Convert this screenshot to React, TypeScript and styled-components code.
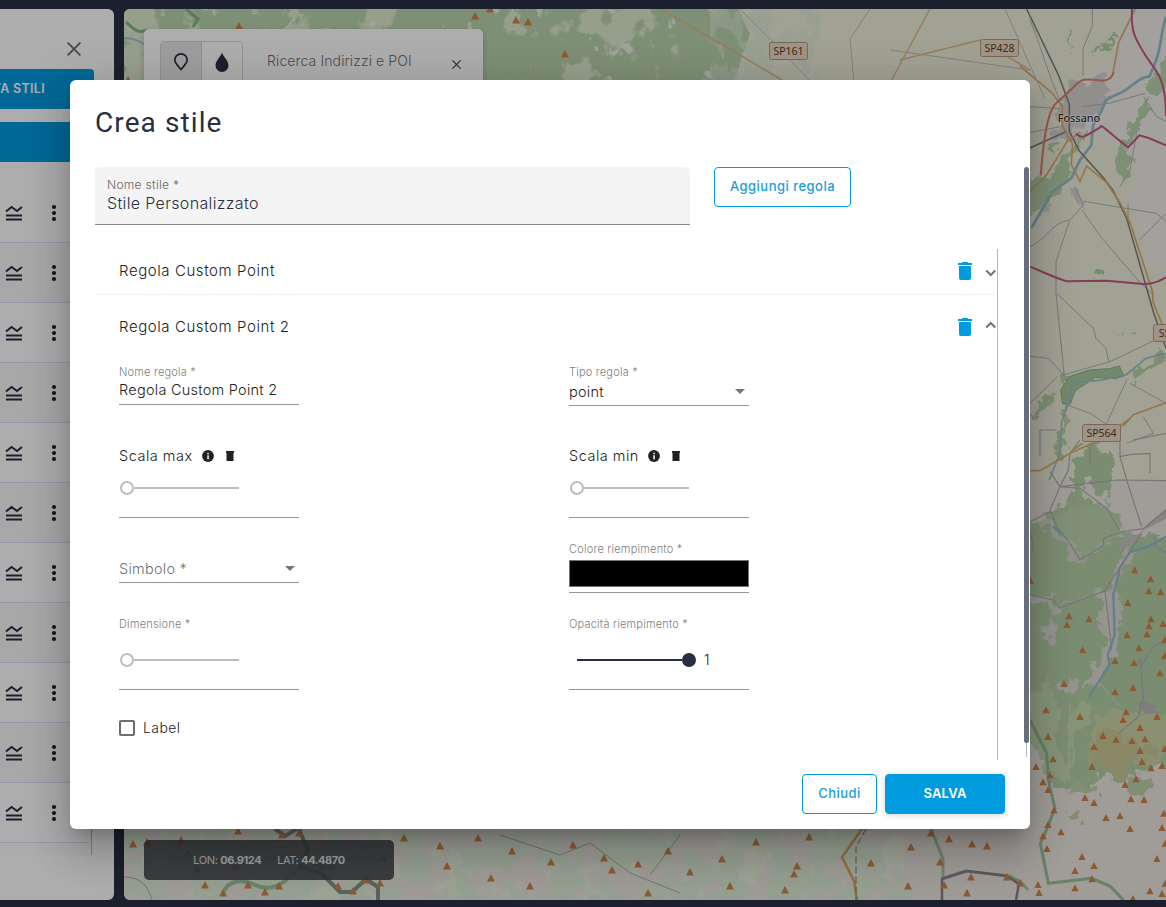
import React from 'react';
import styled, { createGlobalStyle } from 'styled-components';

const GlobalStyle = createGlobalStyle`
  * { box-sizing: border-box; }
  html, body { margin: 0; height: 100%; overflow: hidden; }
  body { font-family: Inter, "Open Sans", sans-serif; color: #212121; }
`;

const Page = styled.div`
  position: relative;
  display: flex;
  gap: 10px;
  width: 1166px;
  height: 907px;
  padding: 9px 0 7px;
  background: #2a2e43;
  overflow: hidden;
`;

/* ---------- sidebar ---------- */
const Sidebar = styled.aside`
  display: flex;
  flex-direction: column;
  width: 114px;
  background: #fff;
  border-radius: 0 6px 6px 0;
  overflow: hidden;
`;
const SidebarTop = styled.div`
  display: flex;
  justify-content: flex-end;
  height: 60px;
  padding: 33px 33px 0 0;
`;
const SideButton = styled.div<{ $square?: boolean }>`
  display: flex;
  align-items: center;
  justify-content: flex-end;
  width: 94px;
  height: 40px;
  margin-bottom: 13px;
  padding: 0 49px 1px 0;
  background: #009adf;
  border-radius: ${(p) => (p.$square ? 0 : '0 4px 4px 0')};
  color: #fff;
  font-size: 12.5px;
  font-weight: 600;
  letter-spacing: 0.3px;
  white-space: nowrap;
`;
const LayerList = styled.div`
  width: 92px;
  height: 672px;
  margin-top: 8px;
  border-right: 1px solid #b0bac1;
  background: #fcfcfc;
`;
const LayerRow = styled.div<{ $odd: boolean }>`
  display: flex;
  align-items: center;
  gap: 22px;
  width: 89px;
  height: 60px;
  padding: 0 0 0 4px;
  border-bottom: 1px solid #dedff5;
  background: ${(p) => (p.$odd ? '#f8f8fa' : '#fff')};
`;

/* ---------- map ---------- */
const MapArea = styled.main`
  position: relative;
  flex: 1;
  border-radius: 6px 0 0 6px;
  overflow: hidden;
`;
const MapSvg = styled.svg`
  display: block;
`;
const SearchPanel = styled.div`
  position: absolute;
  left: 20px;
  top: 20px;
  display: flex;
  width: 339px;
  height: 80px;
  padding: 12px 16px;
  background: #fff;
  border-radius: 5px;
  box-shadow: 0 2px 6px rgba(0, 0, 0, 0.2);
`;
const ToggleGroup = styled.div`
  display: flex;
  width: 83px;
  height: 48px;
  border: 1px solid #d5d5d5;
  border-radius: 4px;
  overflow: hidden;
`;
const Toggle = styled.div<{ $active?: boolean }>`
  display: flex;
  justify-content: center;
  flex: 1;
  padding-top: 9px;
  background: ${(p) => (p.$active ? '#e8e8e8' : '#fff')};
  & + & { border-left: 1px solid #d5d5d5; }
`;
const SearchText = styled.span`
  flex: 1;
  padding: 11px 0 0 24px;
  font-size: 14px;
  font-weight: 300;
  letter-spacing: 0.12px;
  line-height: 18px;
  color: #707070;
`;
const SearchClose = styled.div`
  padding: 12px 6px 0 0;
`;
const Coordinates = styled.div`
  position: absolute;
  left: 20px;
  top: 831px;
  display: flex;
  align-items: center;
  justify-content: center;
  gap: 16px;
  width: 250px;
  height: 40px;
  background: rgba(66, 71, 76, 0.88);
  border-radius: 5px;
  color: #e8e8e8;
  font-size: 11px;
  letter-spacing: -0.4px;
  b { font-weight: 700; }
`;

/* ---------- dialog ---------- */
const Backdrop = styled.div`
  position: absolute;
  inset: 0;
  padding: 80px 70px;
  background: rgba(0, 0, 0, 0.32);
`;
const Dialog = styled.section`
  display: flex;
  flex-direction: column;
  width: 960px;
  height: 749px;
  background: #fff;
  border-radius: 6px;
  box-shadow: 0 11px 15px -7px rgba(0, 0, 0, 0.2), 0 24px 38px 3px rgba(0, 0, 0, 0.14),
    0 9px 46px 8px rgba(0, 0, 0, 0.12);
`;
const DialogTitle = styled.h1`
  height: 87px;
  margin: 0;
  padding: 25px 25px 0;
  font: 400 28px/36px Roboto, sans-serif;
  letter-spacing: 1.1px;
  color: #2a2e43;
`;
const DialogBody = styled.div`
  display: flex;
  justify-content: space-between;
  height: 593px;
  padding: 0 1px 0 25px;
`;
const Content = styled.div`
  width: 903px;
`;
const ScrollRail = styled.div`
  width: 5px;
  height: 590px;
  background: linear-gradient(#b0bac1, #b0bac1) 2px 0 / 1px 100% no-repeat;
`;
const ScrollThumb = styled.div`
  height: 576px;
  border-radius: 3px;
  background: #676d7d;
`;
const StyleRow = styled.div`
  display: flex;
  align-items: flex-start;
  gap: 24px;
  height: 82px;
`;
const FilledField = styled.div`
  display: flex;
  flex-direction: column;
  width: 595px;
  height: 58px;
  padding: 10px 12px 0;
  background: #f4f4f4;
  border-bottom: 1px solid #8c8c8c;
  border-radius: 4px 4px 0 0;
`;
const FilledLabel = styled.label`
  font-size: 12px;
  font-weight: 300;
  letter-spacing: 0.3px;
  line-height: 16px;
  color: #666;
`;
const FilledValue = styled.span`
  font-size: 16px;
  font-weight: 300;
  line-height: 21px;
  letter-spacing: 0.35px;
  color: #2a2e43;
`;
const Button = styled.button<{ $primary?: boolean; $width: number }>`
  width: ${(p) => p.$width}px;
  height: 40px;
  padding: 0 0 2px;
  border: 1px solid #009adf;
  border-radius: 4px;
  background: ${(p) => (p.$primary ? '#009adf' : '#fff')};
  color: ${(p) => (p.$primary ? '#fff' : '#1b9cd9')};
  font: ${(p) => (p.$primary ? 600 : 500)} 13px Inter, sans-serif;
  letter-spacing: ${(p) => (p.$primary ? 0.2 : 0.48)}px;
  white-space: nowrap;
  box-shadow: ${(p) => (p.$primary ? '0 1px 6px rgba(0,0,0,.18)' : 'none')};
`;
const RuleList = styled.div`
  height: 511px;
  border-right: 1px solid #b0bac1;
`;
const RuleHeader = styled.div<{ $open?: boolean }>`
  display: flex;
  align-items: center;
  width: 901px;
  height: ${(p) => (p.$open ? 55 : 46)}px;
  padding: ${(p) => (p.$open ? '9px 0 0 24px' : '0 0 1px 24px')};
  border-bottom: ${(p) => (p.$open ? 0 : 1)}px solid #f2f2f2;
`;
const RuleName = styled.span`
  flex: 1;
  font-size: 15px;
  font-weight: 300;
  line-height: 20px;
  letter-spacing: 0.58px;
  color: #222;
`;
const HeaderIcons = styled.div`
  display: flex;
  align-items: center;
  gap: 8px;
`;
const Form = styled.div`
  display: grid;
  grid-template-columns: 450px 180px;
  grid-template-rows: 56px 112px 75px 97px 76px;
  padding-left: 24px;
`;
const Field = styled.div<{ $top: number; $height: number }>`
  display: flex;
  flex-direction: column;
  width: 180px;
  height: ${(p) => p.$height}px;
  padding-top: ${(p) => p.$top}px;
  border-bottom: 1px solid #949494;
`;
const SmallLabel = styled.label`
  font-size: 11px;
  font-weight: 300;
  line-height: 14px;
  letter-spacing: 0.2px;
  color: #808080;
`;
const FieldValue = styled.div<{ $placeholder?: boolean; $offset?: number }>`
  display: flex;
  align-items: center;
  justify-content: space-between;
  height: 20px;
  margin-top: ${(p) => p.$offset ?? 0}px;
  padding-right: 4px;
  font-size: 14.5px;
  font-weight: 300;
  letter-spacing: 0.25px;
  color: ${(p) => (p.$placeholder ? '#707070' : '#222')};
`;
const ScaleLabel = styled.div`
  display: flex;
  align-items: center;
  height: 20px;
  color: #222;
  font-size: 14.5px;
  font-weight: 300;
  letter-spacing: 0.5px;
  svg:first-of-type { margin-left: 8px; }
  svg:last-of-type { margin-left: 9px; }
`;
const ScaleName = styled.span`
  padding-bottom: 2px;
`;
const SliderLine = styled.div<{ $full?: boolean; $gap: number }>`
  display: flex;
  align-items: center;
  height: 16px;
  margin-top: ${(p) => p.$gap}px;
  padding-left: ${(p) => (p.$full ? 8 : 1)}px;
`;
const SliderThumb = styled.i<{ $full?: boolean }>`
  width: 14px;
  height: 14px;
  border: 2px solid ${(p) => (p.$full ? '#2a2e43' : '#bdbdbd')};
  border-radius: 50%;
  background: ${(p) => (p.$full ? '#2a2e43' : '#fff')};
`;
const SliderTrack = styled.i<{ $full?: boolean }>`
  width: 105px;
  height: 2px;
  background: ${(p) => (p.$full ? '#2a2e43' : '#bdbdbd')};
`;
const SliderValue = styled.span`
  padding-left: 8px;
  font-size: 14px;
  font-weight: 300;
  line-height: 14px;
  color: #222;
`;
const Swatch = styled.div`
  height: 27px;
  margin-top: 4px;
  border: 1px solid #767676;
  background: #000;
`;
const CheckLabel = styled.label`
  display: flex;
  align-items: center;
  gap: 8px;
  height: 16px;
  margin-top: 30px;
  color: #222;
  font-size: 14px;
  font-weight: 300;
  letter-spacing: 0.4px;
`;
const CheckText = styled.span`
  padding-bottom: 2px;
`;
const CheckBox = styled.i`
  width: 16px;
  height: 16px;
  border: 2px solid #6d6d6d;
  border-radius: 2px;
`;
const Actions = styled.footer`
  display: flex;
  justify-content: flex-end;
  gap: 8px;
  padding: 14px 25px 15px;
`;

/* ---------- icons ---------- */
const Trash = () => (
  <svg width="24" height="24" viewBox="0 0 24 24" fill="#009adf">
    <path d="M6 19c0 1.100.9 2 2 2h8c1.100 0 2-.9 2-2V7H6v12zM19 4h-3.500l-1-1h-5l-1 1H5v2h14V4z" />
  </svg>
);
const Chevron = ({ up }: { up?: boolean }) => (
  <svg width="11" height="24" viewBox=".5 0 10.500 24" fill="none" stroke="#737373" strokeWidth="2">
    <path d={up ? 'M1.500 12.500l4.500-4.500 4.500 4.500' : 'M1.500 11.500l4.500 4.500 4.500-4.500'} />
  </svg>
);
const Info = () => (
  <svg width="14" height="14" viewBox="0 0 14 14">
    <circle cx="7" cy="7" r="5.900" fill="#212121" />
    <path d="M6.300 3.800h1.500v1.400H6.300zM6.300 6.300h1.500v4H6.300z" fill="#fff" />
  </svg>
);
const SmallTrash = () => (
  <svg width="12" height="14" viewBox="0 0 12 14">
    <path d="M2 2h8v1.700H9.500V12h-7V3.700H2z" fill="#212121" />
  </svg>
);
const Caret = () => (
  <svg width="10" height="5" viewBox="0 0 10 5">
    <path d="M0 0h10L5 5z" fill="#757575" />
  </svg>
);
const Cross = ({ size, color }: { size: number; color: string }) => (
  <svg width={size} height={size} viewBox="0 0 14 14" fill="none" stroke={color} strokeWidth="1.800">
    <path d="M.6.6l12.800 12.800M13.400.6L.6 13.400" />
  </svg>
);
const LayerIcon = () => (
  <svg width="20" height="20" viewBox="0 0 20 20" fill="none" stroke="#2a2e43" strokeWidth="2">
    <path d="M2 8.600L7.600 4l5.400 4L18 4M2 12.500h16M2 16.500h16" />
  </svg>
);
const Kebab = () => (
  <svg width="16" height="20" viewBox="0 0 16 20" fill="#1d2024">
    <circle cx="8" cy="4" r="2.100" />
    <circle cx="8" cy="10" r="2.100" />
    <circle cx="8" cy="16" r="2.100" />
  </svg>
);
const Pin = () => (
  <svg width="20" height="22" viewBox="0 0 20 22" fill="none" stroke="#2a2e43" strokeWidth="1.700">
    <path d="M10 18.500C7.500 15.500 3.800 12 3.800 9a6.200 6.200 0 0 1 12.400 0c0 3-3.700 6.500-6.200 9.500z" />
  </svg>
);
const Drop = () => (
  <svg width="20" height="22" viewBox="0 0 20 22" fill="#2a2e43">
    <path d="M10 1.500c1 3.800 6.500 8 6.500 13a6.500 6.500 0 0 1-13 0c0-5 5.500-9.200 6.500-13z" />
  </svg>
);

/* ---------- map drawing ---------- */
const northPeaks = [[565, 54], [475, 16], [516, 20], [528, 22], [239, 26], [128, 80], [490, 9]];
const eastPeaks = [
  [344, 450], [392, 477], [386, 513], [422, 516], [323, 548], [147, 588], [141, 614], [207, 597], [188, 690],
  [393, 597], [387, 618], [429, 611], [381, 642], [321, 645], [357, 684], [285, 722], [342, 728], [132, 791],
  [339, 803], [285, 816], [420, 759], [78, 870], [180, 890], [318, 876], [309, 899], [411, 890], [84, 950],
  [360, 923], [249, 947], [288, 959], [336, 962], [375, 957], [222, 980], [360, 992], [216, 1040], [366, 1025],
  [393, 1044], [426, 1037], [99, 1017], [48, 1040], [90, 1065], [69, 1086], [84, 1109], [348, 1077], [315, 1094],
  [195, 1133], [222, 1148], [333, 1137], [372, 1139], [102, 1170], [84, 1214], [258, 1193], [300, 1187], [330, 1226],
  [426, 1223], [69, 1248], [123, 1236], [81, 1286], [186, 1310], [222, 1337], [165, 1352], [411, 1316], [216, 1377],
  [165, 1404], [54, 1394], [57, 1418], [390, 1413], [426, 1421], [339, 1436], [434, 660], [434, 708], [434, 986],
  [432, 1180], [436, 1270], [436, 1390], [32, 482],
];
const southPeaks = [
  [133, 844], [147, 842], [181, 840], [188, 852], [197, 869], [235, 867], [205, 885], [223, 893], [248, 885],
  [265, 892], [279, 886], [238, 831], [302, 866], [316, 863], [322, 867], [331, 867], [338, 886], [353, 891],
  [366, 880], [380, 883], [282, 835], [299, 833], [404, 838], [383, 858],
  [440, 846], [447, 866], [478, 838], [491, 878], [512, 851], [530, 886],
  [551, 862], [573, 845], [604, 858], [612, 870], [638, 864], [668, 851], [648, 893], [690, 872], [722, 859],
  [730, 886], [756, 842], [785, 890], [809, 837], [797, 866], [794, 874], [871, 863], [911, 847],
  [908, 886], [931, 833], [949, 839], [972, 844], [987, 846], [940, 862], [944, 885], [971, 877], [967, 893],
  [1007, 877], [1020, 883],
];

const Peaks = ({ points, size = 4 }: { points: number[][]; size?: number }) => (
  <path
    fill="#d2844a"
    d={points.map(([x, y]) => `M${x} ${y - size}l${size} ${size * 1.9}h${-2 * size}z`).join('')}
  />
);

const RoadSign = ({ x, y, w, label }: { x: number; y: number; w: number; label: string }) => (
  <g>
    <rect x={x} y={y} width={w} height="17" rx="2" fill="#eadac6" stroke="#b39a80" strokeWidth="1" />
    <text x={x + w / 2} y={y + 12.5} textAnchor="middle" fontFamily="Noto Sans" fontSize="10.500" fill="#5c4022">
      {label}
    </text>
  </g>
);

/* Fossano and the plain: three units to the pixel */
const Plain = () => (
  <g transform="translate(1020 0) scale(.333333)">
    <g filter="url(#rough)">
      <path d="M0 0H470V760L300 430 150 400 0 60z" fill="#f1eee8" />
      <path d="M0 0h330l-60 187-110 60L90 300 0 200z" fill="#eeefdb" />
      <path d="M438 600l-60-60-50 20 50 200 60 100z" fill="#f1eee8" />
      <path d="M120 300l40-60 50 20 30-50 30 50-20 60-60 50-30 50-60-10zM155 560l36 20v50l-26-20zM55 606l35 5-10 24-30 5z" fill="#d6d3d0" />
      <path d="M460 120l-40 90-42 44 20 36 70-60zM375 290l10 0 5 50-20 20-30 70-20 30 10 60-20 30-20-16 6-70 10-40zM0 560l60-40 20 20 60-90 50-60 10 6-40 60-16 80-54 60-50 40-40 70-30 14zM90 430l20-6 6 20-16 20z" fill="#b9d3ac" />
      <path d="M150 90l15 10-10 50zM195 162l60-20 36-54v20l-30 34 10 16-30-4zM230 806l18-12 10 12-8 22-18-4zM306 990l10 4-4 10zM330 1000l20-6-4 10z" fill="#a7cf9f" />
      <path d="M130 1130l22 0-2 80-15 70-5 90h-26l14-80 20-70zM30 1240l50-50 30-10-20 40-60 40zM330 1120l100-66 8 20-90 60-10 20z" fill="#b8d1a8" />
    </g>
    <path d="M122 1170l26-40 60-20 60-4 30-8 14 30-26 8-60-4-60 40-16 40h-22z" fill="#a9cb9e" stroke="#86b584" strokeWidth="3" />
    <path d="M438 50c-20 60-10 100-50 180-30 0-50 30-85 48-28 14-30 10-46 24l-14 34-24 40-5 60-34 44-26 54-56 40-64 110" fill="none" stroke="#94bdcc" strokeWidth="8" />
    <path d="M438 1060l-60 15-60 50-80 16-80 6-8 50-25 70-5 90-50 130-40 60" fill="none" stroke="#9dc1cd" strokeWidth="5" />
    <g fill="none" stroke="#b3b1b4" strokeWidth="3">
      <path d="M217 27v50l-28 70v80M30 60c30 70 60 180 90 240M30 320l90 6M30 398l90-18M186 320l80-10 110-30M30 740c60-30 60-70 120-80l36-40 4-16 220 36 28 24M186 630l56 80 120 140 40 36M148 664l-40 120v96l24 240M110 880l110 105 8 30 30 30 8 40M162 560l24 44M438 640L358 720M438 1005L270 1085l-140 40-44-50-56-6M112 1130L30 1210M130 1210l80 30 60 40M320 1140l-60 130M330 1150l108 60M370 1250l30 50-80 30M370 290l40 60 28 14M350 400l-20 110-30 50M324 610v60" />
    </g>
    <path d="M20 27l96 200 32 86v80l30 60 72 80 30 40 40 82 80 280 38 110M30 444l110-50" fill="none" stroke="#7b7e76" strokeWidth="4.500" />
    <path d="M0 198l95 80 32 40v60l22 40 30-20M30 574l50-50 68-110 10 20-4 60 26 50 20-46 60 50 40 60 30 60 68 208v28l34 82M346 27l-50 100-18 96M438 1208l-98 36-30 34M188 1330l-30 20" fill="none" stroke="#dcae6b" strokeWidth="5" />
    <path d="M62 526c10-120 20-180 42-212l60-56c30-30 35-18 86-16 20-3 26-10 31-26" fill="none" stroke="#dd816c" strokeWidth="6" />
    <path d="M336 27c-4 70 10 88 36 132 28 50 66 60 66 190M168 402c20 16 26 8 72-20 6-12 10 4 84 60l34-36 28 8 52 22M30 800c50 20 60 28 110 44l120-2 110 10c40 0 50-12 68-20" fill="none" stroke="#c9577e" strokeWidth="6" />
  </g>
);

/* Foothills and mountains, same scale */
const Foothills = () => (
  <g transform="translate(1020 420) scale(.333333)">
    <g filter="url(#rough)">
      <path d="M0 330l70-40 30-30 70-36 50 24 50 50 40 40 130 20 100 60v760H140L0 900z" fill="#b5d0a7" />
      <path d="M90 280l20 50 60 40 20 54 40-30 30-40 60-20-40-70-60-10z" fill="#bdd5b0" />
      <path d="M150 180l20-50 30-40 10-20 20-10 20 40 10-20 24 30-6 30-16 10 10 120-14-60-20 20-20-50-20-10-16 60-20 10z" fill="#b4d0a6" />
      <path d="M0 880l30-60 50-40 20 40 20 60-10 100 30 60 10-160 50-50 20 40-60 80-4 130-60-10-76-110z" fill="#c6dab1" />
      <path d="M230 900l60-30 60 20 50-20 60 40v70l-60 60-60-14-80 24-60-30z" fill="#cdd5a9" />
      <path d="M200 990l50-60 60 10 20 40 60-20 20 40-70 20-30 50 70 10 10 30-60 10-40-50-60-30z" fill="#cccb98" />
      <path d="M0 1080l60 10 80 14 60 10 40-50 50 20 60-20 110-40v460H0z" fill="#ece6e1" />
      <path d="M140 1100l40-14 40 16 20-4-10 20-60 6-30-4zM140 1180l30-8 16 12-30 12zM180 1220l20-10 4 20zM320 1080l60-10 20 20-30 40-50-10z" fill="#bdd2aa" />
      <path d="M30 520l60 10 26 30 70-26 70-24 30-70 30-50 40-10-20 50-30 30-16 60 6 60 8 70-14 40-30 60-30 40-30 0 24-40-20-10 30-20 20-40-20-160-50 10-50 30-44 20 20 40-14 60-14-40-40-4 40-20 14-40-20-20-50-10zM120 790l60 0 6 14-30 20-30-16z" fill="#dedad6" />
      <path d="M30 300l40-14 20 20 36 36 40 30 20 44 40-30 30-26v20l-50 30-20 20-36-10-14-46-50-34-20-30z" fill="#d4d8cb" />
    </g>
    <path d="M296 380l20-36h40l24-28 58-50v30l-70 36-10 24-50 34z" fill="#c6c3c5" />
    <path d="M350 850l20-6 40 14-10 10 20 10-40 4zM350 720l20-10-10 30z" fill="#bbb8bb" />
    <path d="M438 350l-50 28-60 20-28 46-20 80 4 120-20 60 4 30-60 96M100 320l26 24" fill="none" stroke="#91bdce" strokeWidth="7" />
    <g fill="none" stroke="#b0adb0" strokeWidth="3.500">
      <path d="M180 60l-30 40-5 50-25 50-30 70 20 50 40 50 30 50 70-44v-20l50-20 70-10 68-56M90 155l30 45 60 5 80 60 38 66M30 305l60-30M30 340c12 20 10 40 6 60M120 200l170-20 148 2M300 60v50l20 70 45 140M300 110l30-6 60-4v60M340 60l98-20M60 30v80M60 30h50M30 525l70 15 18 25 137-53 110-172M255 512l20 178M438 660l-38 20-38 60 8 90-15 60-60 50M400 340l10 40 28 20M210 70v60" />
    </g>
    <path d="M150 850l-4 230M240 790l60 70" stroke="#cfdcca" strokeWidth="3" fill="none" />
    <path d="M30 152h30l90-52 90-40L325 0" fill="none" stroke="#dcae6b" strokeWidth="5" />
    <path d="M30 900l50 100 5 80 20 85-30 75-14 30 24 120 130-15 56 24 40 42" fill="none" stroke="#8bb98c" strokeWidth="9" opacity=".85" />
    <Peaks points={eastPeaks} size={11} />
  </g>
);

const MapDrawing = () => (
  <MapSvg width="1042" height="891" viewBox="124 9 1042 891">
    <defs>
      <filter id="rough" x="-.1" y="-.1" width="1.200" height="1.200">
        <feTurbulence type="fractalNoise" baseFrequency=".028" numOctaves="5" seed="3" />
        <feDisplacementMap in="SourceGraphic" scale="60" xChannelSelector="R" yChannelSelector="G" />
      </filter>
      <filter id="woods" x="0" y="0" width="1" height="1">
        <feTurbulence type="fractalNoise" baseFrequency="0.035 0.03" numOctaves="6" seed="8" />
        <feColorMatrix values="0 0 0 0 0.71  0 0 0 0 0.82  0 0 0 0 0.66  18 0 0 0 -8.200" />
      </filter>
      <filter id="clearings" x="0" y="0" width="1" height="1">
        <feTurbulence type="fractalNoise" baseFrequency="0.06 0.05" numOctaves="6" seed="21" />
        <feColorMatrix values="0 0 0 0 0.85  0 0 0 0 0.87  0 0 0 0 0.81  14 0 0 0 -10" />
      </filter>
      <filter id="meadows" x="0" y="0" width="1" height="1">
        <feTurbulence type="fractalNoise" baseFrequency="0.025" numOctaves="6" seed="4" />
        <feColorMatrix values="0 0 0 0 0.80  0 0 0 0 0.86  0 0 0 0 0.69  16 0 0 0 -8.800" />
      </filter>
    </defs>
    <rect x="124" y="9" width="1042" height="891" fill="#eeeedb" />
    <path d="M100 -10H730l20 44-20 60H100z" fill="#b9d3ac" />
    <rect x="124" y="9" width="600" height="75" filter="url(#meadows)" opacity=".8" />
    <rect x="124" y="9" width="620" height="75" filter="url(#clearings)" />
    <rect x="710" y="9" width="110" height="75" filter="url(#woods)" opacity=".6" />
    <path d="M124 820h906v80H124z" fill="#e9e4dd" />
    <rect x="124" y="820" width="780" height="80" filter="url(#meadows)" />
    <rect x="124" y="820" width="790" height="80" filter="url(#woods)" />
    <path d="M124 38c18 0 20 10 36 12" stroke="#9ec6d6" strokeWidth="2" fill="none" />
    <path d="M126 22c12 12 14 10 22 8M186 9l12 10-5 8" stroke="#82b982" strokeWidth="3" fill="none" />
    <Plain />
    <path d="M1030 480h136v420h-136z" fill="#ece6e1" />
    <Foothills />

    <path d="M1005 9l40 90M870 9l-20 30 4 44M740 9l30 30 42 44M890 50l140 20" stroke="#c1bcb8" fill="none" />
    <path d="M660 9l70 40 60 36M930 9l-40 74M900 60l80-20 50 30" stroke="#dfb887" strokeWidth="1.500" fill="none" />
    <path d="M862 829l-20 28 12 24 3 19" stroke="#d9a15b" strokeWidth="2.500" fill="none" />
    <path d="M866 829l-10 18v53" stroke="#7b7e78" fill="none" strokeDasharray="7 3" />
    <path d="M931 829l12 30v19l22-7 45 5 11 6 7 8" stroke="#8ebd90" strokeWidth="3" fill="none" opacity=".8" />
    <path d="M942 900V879l25-8 40 5 12 8-3 16" stroke="#8f7c91" strokeWidth="2.500" fill="none" />
    <path d="M299 829l9 22-8 16 22 7 18 18h12l14-13 12 8v13M275 829l10 7 12-7" stroke="#6f817a" strokeWidth="4" fill="none" opacity=".85" />
    <path d="M223 893c6-14 20-14 32-8s22 2 30-4l16-14" stroke="#8dbc8d" strokeWidth="4" fill="none" opacity=".85" />
    <path d="M124 877c18 0 24 10 28 23M500 835l60 20 30-12 40 30 50 20M680 835l-30 40" stroke="#aaa9b0" fill="none" />
    <Peaks points={northPeaks} />
    <Peaks points={southPeaks} />
    <RoadSign x={769.5} y={42.5} w={38} label="SP161" />
    <RoadSign x={980.5} y={39.5} w={38} label="SP428" />
    <RoadSign x={1082.5} y={424.5} w={38} label="SP564" />
    <RoadSign x={1153.5} y={324.5} w={34} label="SS28" />
    <text x="1079" y="122" textAnchor="middle" fontFamily="Noto Sans" fontSize="11" fill="#222" stroke="#fff" strokeWidth="2" strokeOpacity=".55" paintOrder="stroke">
      Fossano
    </text>
  </MapSvg>
);

const ScaleField = ({ name }: { name: string }) => (
  <Field $top={40} $height={112}>
    <ScaleLabel>
      <ScaleName>{name}</ScaleName>
      <Info />
      <SmallTrash />
    </ScaleLabel>
    <SliderLine $gap={14}>
      <SliderThumb />
      <SliderTrack />
    </SliderLine>
  </Field>
);

export default function App() {
  return (
    <Page>
      <GlobalStyle />
      <Sidebar>
        <SidebarTop>
          <Cross size={14} color="#6c6c6c" />
        </SidebarTop>
        <SideButton>TA STILI</SideButton>
        <SideButton $square />
        <LayerList>
          {Array.from({ length: 11 }, (_, i) => (
            <LayerRow key={i} $odd={i % 2 === 1}>
              <LayerIcon />
              <Kebab />
            </LayerRow>
          ))}
        </LayerList>
      </Sidebar>
      <MapArea>
        <MapDrawing />
        <SearchPanel>
          <ToggleGroup>
            <Toggle $active>
              <Pin />
            </Toggle>
            <Toggle>
              <Drop />
            </Toggle>
          </ToggleGroup>
          <SearchText>Ricerca Indirizzi e POI</SearchText>
          <SearchClose>
            <Cross size={9} color="#444" />
          </SearchClose>
        </SearchPanel>
        <Coordinates>
          <span>LON: <b>06.9124</b></span>
          <span>LAT: <b>44.4870</b></span>
        </Coordinates>
      </MapArea>
      <Backdrop>
        <Dialog>
          <DialogTitle>Crea stile</DialogTitle>
          <DialogBody>
            <Content>
              <StyleRow>
                <FilledField>
                  <FilledLabel>Nome stile *</FilledLabel>
                  <FilledValue>Stile Personalizzato</FilledValue>
                </FilledField>
                <Button $width={137}>Aggiungi regola</Button>
              </StyleRow>
              <RuleList>
                <RuleHeader>
                  <RuleName>Regola Custom Point</RuleName>
                  <HeaderIcons>
                    <Trash />
                    <Chevron />
                  </HeaderIcons>
                </RuleHeader>
                <RuleHeader $open>
                  <RuleName>Regola Custom Point 2</RuleName>
                  <HeaderIcons>
                    <Trash />
                    <Chevron up />
                  </HeaderIcons>
                </RuleHeader>
                <Form>
                  <Field $top={15} $height={55}>
                    <SmallLabel>Nome regola *</SmallLabel>
                    <FieldValue>Regola Custom Point 2</FieldValue>
                  </Field>
                  <Field $top={15} $height={56}>
                    <SmallLabel>Tipo regola *</SmallLabel>
                    <FieldValue $offset={2}>
                      point <Caret />
                    </FieldValue>
                  </Field>
                  <ScaleField name="Scala max" />
                  <ScaleField name="Scala min" />
                  <Field $top={40} $height={65}>
                    <FieldValue $placeholder>
                      Simbolo * <Caret />
                    </FieldValue>
                  </Field>
                  <Field $top={24} $height={75}>
                    <SmallLabel>Colore riempimento *</SmallLabel>
                    <Swatch />
                  </Field>
                  <Field $top={24} $height={97}>
                    <SmallLabel>Dimensione *</SmallLabel>
                    <SliderLine $gap={21}>
                      <SliderThumb />
                      <SliderTrack />
                    </SliderLine>
                  </Field>
                  <Field $top={24} $height={97}>
                    <SmallLabel>Opacità riempimento *</SmallLabel>
                    <SliderLine $full $gap={21}>
                      <SliderTrack $full />
                      <SliderThumb $full />
                      <SliderValue>1</SliderValue>
                    </SliderLine>
                  </Field>
                  <CheckLabel>
                    <CheckBox />
                    <CheckText>Label</CheckText>
                  </CheckLabel>
                </Form>
              </RuleList>
            </Content>
            <ScrollRail>
              <ScrollThumb />
            </ScrollRail>
          </DialogBody>
          <Actions>
            <Button $width={75}>Chiudi</Button>
            <Button $primary $width={120}>SALVA</Button>
          </Actions>
        </Dialog>
      </Backdrop>
    </Page>
  );
}
